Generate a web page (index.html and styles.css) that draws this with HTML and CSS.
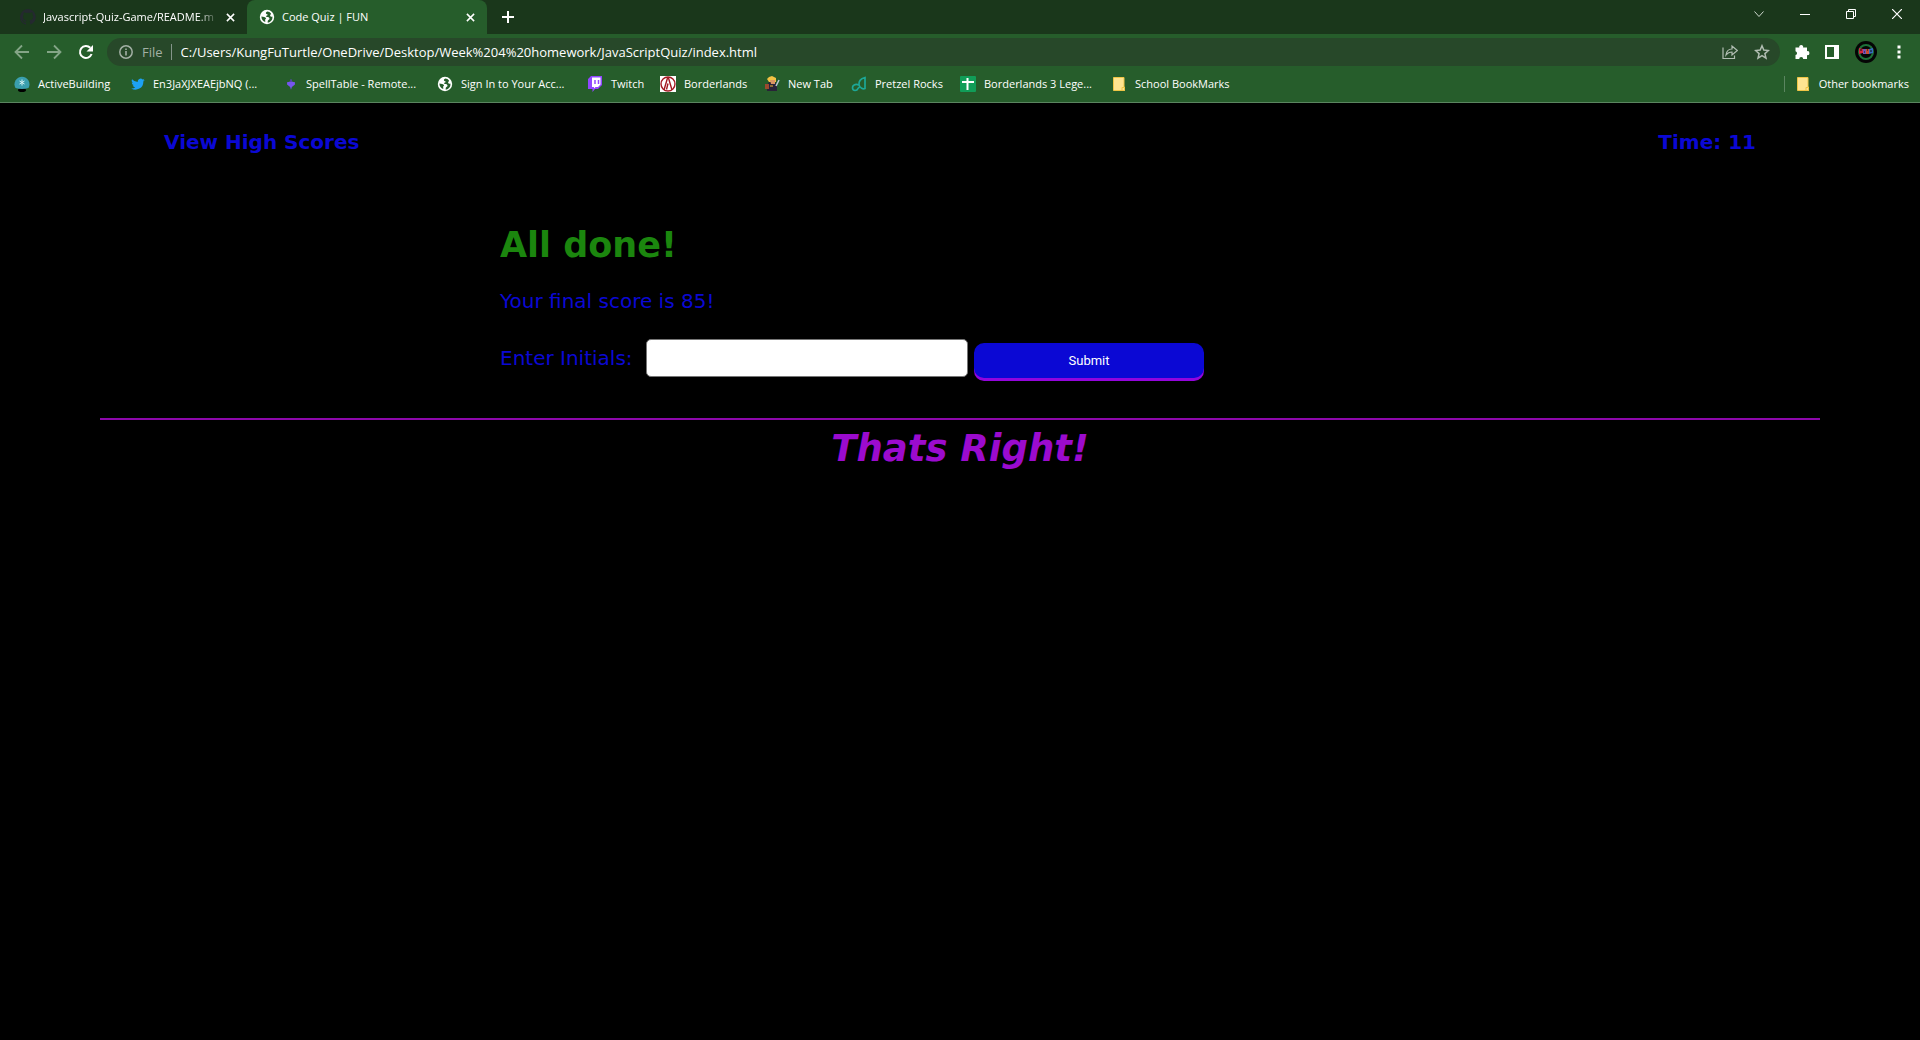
FILE: index.html
```html
<!DOCTYPE html>
<html lang="en">
<head>
<meta charset="utf-8">
<title>Code Quiz | FUN</title>
<link rel="stylesheet" href="styles.css">
</head>
<body>
<svg class="defs" aria-hidden="true">
  <symbol id="close" viewBox="0 0 10 10"><path d="M1 1l8 8M9 1l-8 8" stroke="currentColor" stroke-width="1.7" fill="none"/></symbol>
  <symbol id="globe" viewBox="0 0 16 16"><circle cx="8" cy="8" r="7.2" fill="#fff"/><path d="M8.300 2.600C6.300 3.400 6.500 5 8 5.200C9.300 5.400 8.600 6.600 7.300 6.800C6.800 7.300 7 8 8 8C9.600 8 10.600 8.600 10.500 9.800C10.300 10.900 9.200 10.800 8.800 11.800L8.600 13.600C12 13.200 13.800 10.300 13.400 7.400C12.600 8 11.600 7.800 11.200 7C10.800 6 12 5.600 12 4.600C11.200 3.400 9.800 2.700 8.300 2.600ZM2.400 7.600L5.200 7.900C7 8.300 7.600 9.300 6.600 10.100C5.600 10.800 6.600 12 6.200 13.100C4 12.400 2.400 10.400 2.400 7.600Z" fill="#265d2b"/></symbol>
  <symbol id="folder" viewBox="0 0 12 14"><path d="M0.500 0.500h10.500v9.500h.500v3.500H0.500Z" fill="#ffe490" stroke="#efc546"/><path d="M9 10.500h2.500v3H9Z" fill="#ffe490" stroke="#efc546"/></symbol>
</svg>
<header class="browser">
  <div class="tabstrip">
    <div class="tab">
      <svg class="ico16" viewBox="0 0 16 16"><path fill="#24292f" d="M8 0a8 8 0 0 0-2.500 15.600c.4.1.5-.2.5-.4v-1.500c-2 .4-2.600-.5-2.800-1-.1-.2-.5-.9-.8-1.100-.3-.2-.7-.6 0-.6s1.100.6 1.300.8c.7 1.200 1.900.9 2.400.7.1-.5.300-.9.500-1.100-1.800-.2-3.600-.9-3.600-4 0-.9.300-1.600.8-2.100-.1-.2-.4-1 .1-2.100 0 0 .7-.2 2.200.8a7.600 7.600 0 0 1 4 0c1.500-1 2.200-.8 2.200-.8.4 1.100.2 1.900.1 2.100.5.600.8 1.300.8 2.100 0 3.100-1.900 3.700-3.700 4 .3.200.6.700.6 1.500v2.200c0 .2.100.5.500.4A8 8 0 0 0 8 0Z"/></svg>
      <span class="tab-title fade">Javascript-Quiz-Game/README.m</span>
      <button class="icon-btn" aria-label="Close tab"><svg class="ico8"><use href="#close"/></svg></button>
    </div>
    <div class="tab active">
      <svg class="ico16"><use href="#globe"/></svg>
      <span class="tab-title">Code Quiz | FUN</span>
      <button class="icon-btn" aria-label="Close tab"><svg class="ico8"><use href="#close"/></svg></button>
    </div>
    <button class="icon-btn new-tab" aria-label="New tab"><svg class="ico12" viewBox="0 0 12 12"><path d="M6 0v12M0 6h12" stroke="#fff" stroke-width="2"/></svg></button>
    <div class="window-controls">
      <button class="icon-btn" aria-label="Search tabs"><svg class="ico10" viewBox="0 0 10 10"><path d="M.5 2.500L5 7.500L9.500 2.500" stroke="#cdd6ce" fill="none"/></svg></button>
      <button class="icon-btn" aria-label="Minimize"><svg class="ico10" viewBox="0 0 10 10"><path d="M0 5.500h10" stroke="#fff"/></svg></button>
      <button class="icon-btn" aria-label="Restore"><svg class="ico10" viewBox="0 0 10 10"><path d="M.5 2.500h7v7h-7ZM2.500 2.500v-2h7v7h-2" stroke="#fff" fill="none"/></svg></button>
      <button class="icon-btn" aria-label="Close"><svg class="ico10" viewBox="0 0 10 10"><path d="M0 0l10 10M10 0L0 10" stroke="#fff" stroke-width="1.200"/></svg></button>
    </div>
  </div>
  <div class="toolbar">
    <div class="nav">
      <button class="icon-btn" aria-label="Back"><svg class="ico16" viewBox="0 0 16 16"><path d="M15 8H2M8 1.500L1.500 8L8 14.500" stroke="#84a587" stroke-width="1.800" fill="none"/></svg></button>
      <button class="icon-btn" aria-label="Forward"><svg class="ico16" viewBox="0 0 16 16"><path d="M1 8h13M8 1.500L14.500 8L8 14.500" stroke="#84a587" stroke-width="1.800" fill="none"/></svg></button>
      <button class="icon-btn" aria-label="Reload"><svg class="ico16" viewBox="0 0 16 16"><path d="M13.600 10A6 6 0 1 1 12.300 3.800" stroke="#fff" stroke-width="2" fill="none"/><path d="M15 1v6.500H8.500Z" fill="#fff"/></svg></button>
    </div>
    <div class="omnibox">
      <svg class="ico14" viewBox="0 0 14 14"><circle cx="7" cy="7" r="6.200" fill="none" stroke="#a3b0a5" stroke-width="1.500"/><path d="M7 6v4.500M7 3.500V5" stroke="#a3b0a5" stroke-width="1.600"/></svg>
      <span class="scheme">File</span>
      <input class="url" type="text" aria-label="Address" value="C:/Users/KungFuTurtle/OneDrive/Desktop/Week%204%20homework/JavaScriptQuiz/index.html">
      <button class="icon-btn" aria-label="Share"><svg class="ico16" viewBox="0 0 16 16"><path d="M1 3.500v11h11.500v-3" stroke="#b1bdb2" stroke-width="1.200" fill="none"/><path d="M4 11C4.500 7 7 5 10 5V2L15.300 6.500L10 11V8C7.500 8 5.500 9 4 11Z" stroke="#b1bdb2" stroke-width="1.200" fill="none"/></svg></button>
      <button class="icon-btn" aria-label="Bookmark"><svg class="ico16" viewBox="0 0 16 16"><path d="M8 1.800l1.800 4.300 4.600.4-3.500 3.100 1.100 4.600L8 11.700l-4 2.500 1.100-4.600L1.600 6.500l4.600-.4Z" stroke="#b1bdb2" stroke-width="1.500" fill="none"/></svg></button>
    </div>
    <div class="extensions">
      <button class="icon-btn" aria-label="Extensions"><svg class="ico16" viewBox="0 0 16 16"><path fill="#fff" d="M1.500 3.500h3.800a2 2 0 1 1 3.800 0h3.900v3.700a2 2 0 1 1 0 3.900v3.900H9.200a2 2 0 0 0-4 0H1.500v-3.900a2 2 0 0 0 0-3.900Z"/></svg></button>
      <button class="icon-btn" aria-label="Side panel"><svg class="ico14" viewBox="0 0 14 14"><path d="M0 0h14v14H0ZM2 2v10h7V2Z" fill="#fff" fill-rule="evenodd"/></svg></button>
      <button class="icon-btn" aria-label="Profile"><svg class="ico22" viewBox="0 0 22 22"><circle cx="11" cy="11" r="11" fill="#050505"/><circle cx="11" cy="11" r="7" fill="none" stroke="#1e7139" stroke-width="2"/><path d="M4 7l4 1v4l-4 1Z" fill="#d4263c"/><path d="M8 8h3v5H8Z" fill="#7354b5"/><path d="M11 8h3v5h-3Z" fill="#c84d33"/><path d="M14 8l4-1v5l-4 1Z" fill="#356bc0"/><path d="M5 9h2M9 11h1M12 9h1M15 10h2" stroke="#111"/></svg></button>
      <button class="icon-btn" aria-label="Menu"><svg class="ico14" viewBox="0 0 14 14"><path d="M5.500 0.500h3v3h-3ZM5.500 5.500h3v3h-3ZM5.500 10.500h3v3h-3Z" fill="#fff"/></svg></button>
    </div>
  </div>
  <nav class="bookmarks">
    <a href="#"><svg class="ico16" viewBox="0 0 16 16"><ellipse cx="8" cy="14" rx="4" ry="2" fill="#000"/><path d="M1.500 12a7.500 7.500 0 1 1 13 0Q8 14 1.500 12Z" fill="#3a9fae"/><path d="M8 3.500v6M5.500 5l5 3M10.500 5l-5 3" stroke="#d3f2f2"/></svg>ActiveBuilding</a>
    <a href="#"><svg class="ico14" viewBox="0 0 24 24"><path fill="#1da1f2" d="M23.600 5a9.600 9.600 0 0 1-2.700.8 4.700 4.700 0 0 0 2-2.600 9.600 9.600 0 0 1-3 1.200 4.800 4.800 0 0 0-8.200 4.300A13.500 13.500 0 0 1 1.900 3.700a4.800 4.800 0 0 0 1.500 6.300 4.700 4.700 0 0 1-2.200-.6 4.800 4.800 0 0 0 3.800 4.700 4.800 4.800 0 0 1-2.100.1 4.800 4.800 0 0 0 4.400 3.300A9.600 9.600 0 0 1 .3 19.500a13.500 13.500 0 0 0 20.800-12A9.700 9.700 0 0 0 23.600 5Z"/></svg>En3JaXJXEAEjbNQ (...</a>
    <a href="#"><svg class="ico14" viewBox="0 0 16 16"><path d="M8 2l1.500 3.500L12.500 6v2.500L9 11.500L8 14.500L7 11.500L3.500 8.500V6l3-.5Z" fill="#7655ef"/><path d="M8 2l1 3.500H7Z" fill="#3c3c83"/></svg>SpellTable - Remote...</a>
    <a href="#"><svg class="ico16"><use href="#globe"/></svg>Sign In to Your Acc...</a>
    <a href="#"><svg class="ico16" viewBox="0 0 16 16"><path d="M4 0h11v9l-4 4H8l-2.500 3v-3H1V3Z" fill="#9147ff"/><path d="M5 1.500h8.500v7L11 11H8.500L7 12.500V11H5Z" fill="#fff"/><path d="M8 4v4M11.500 4v4" stroke="#9147ff" stroke-width="1.500"/></svg>Twitch</a>
    <a href="#"><svg class="ico16" viewBox="0 0 16 16"><path d="M0 0h16v16H0Z" fill="#fff"/><circle cx="8" cy="8" r="7" fill="none" stroke="#a31922" stroke-width="1.400"/><path d="M4 14L7.500 2h1L12 14M6.500 13.500L8 7.500" stroke="#a31922" stroke-width="1.400" fill="none"/></svg>Borderlands</a>
    <a href="#"><svg class="ico16" viewBox="0 0 16 16"><path d="M5 6h6l2 3v6H3V9Z" fill="#292338"/><path d="M5 1l3-1 4 2v4H5L3 3Z" fill="#f3c244"/><path d="M6 4h5v4H7Z" fill="#dc9564"/><path d="M1 8h4v5H1Z" fill="#9b4a2e"/><path d="M12 10l3-6" stroke="#b9c7d8" stroke-width="1.500"/><path d="M6 9h3v2H6Z" fill="#8d6d35"/></svg>New Tab</a>
    <a href="#"><svg class="ico16" viewBox="0 0 16 16"><path d="M14 1.500C10 2.500 7.500 5 8 9C9 12 12 13.500 14 12.500ZM8 9C4 7.500 1.200 9.500 1.500 12C2 15.500 6 15 7 12.500L9 10.500" fill="none" stroke="#1da898" stroke-width="1.700"/></svg>Pretzel Rocks</a>
    <a href="#"><svg class="ico16" viewBox="0 0 16 16"><rect width="16" height="16" rx="1" fill="#119d58"/><path d="M7.500 2v12M2 6h12" stroke="#fff" stroke-width="2"/></svg>Borderlands 3 Lege...</a>
    <a href="#"><svg class="folder"><use href="#folder"/></svg>School BookMarks</a>
    <a class="other" href="#"><svg class="folder"><use href="#folder"/></svg>Other bookmarks</a>
  </nav>
</header>
<div class="page">
  <header class="quiz-head">
    <a href="#">View High Scores</a>
    <span>Time: 11</span>
  </header>
  <main class="result">
    <h1>All done!</h1>
    <p>Your final score is 85!</p>
    <form>
      <label for="initials">Enter Initials:</label>
      <input id="initials" type="text">
      <button type="button">Submit</button>
    </form>
  </main>
  <footer class="feedback">Thats Right!</footer>
</div>
</body>
</html>
```
FILE: styles.css
```css
* { box-sizing: border-box; }
body { margin: 0; min-height: 100vh; background: #000; font-family: "DejaVu Sans", Verdana, sans-serif; }
a { color: inherit; text-decoration: none; }
svg { flex: none; display: block; }
.defs { position: absolute; width: 0; height: 0; }
.ico8 { width: 9px; height: 9px; }
.ico10 { width: 10px; height: 10px; }
.ico12 { width: 12px; height: 12px; }
.ico14 { width: 14px; height: 14px; }
.ico16 { width: 16px; height: 16px; }
.ico22 { width: 22px; height: 22px; }
.folder { width: 12px; height: 14px; margin: 0 2px 0 0; }
.icon-btn { display: flex; align-items: center; justify-content: center; padding: 0; border: 0; background: none; color: #fff; }

.browser { background: #265d2b; color: #fff; font: 11px/16px "Open Sans", "Segoe UI", sans-serif; border-bottom: 1px solid #5b8560; }
.tabstrip { display: flex; height: 34px; background: #1a371b; }
.tab { display: flex; align-items: center; gap: 7px; width: 240px; padding: 0 12px; }
.tab:first-child { width: 247px; padding-left: 20px; }
.tab.active { background: #265d2b; border-radius: 8px 8px 0 0; }
.tab-title { flex: 1; min-width: 0; white-space: nowrap; }
.fade { mask-image: linear-gradient(to right, #000 88%, transparent); }
.new-tab { width: 42px; }
.window-controls { display: flex; margin-left: auto; height: 28px; }
.window-controls .icon-btn { width: 46px; }

.toolbar { display: flex; align-items: center; height: 36px; padding: 0 14px; }
.nav { display: flex; gap: 16px; width: 93px; }
.omnibox { display: flex; flex: 1; align-items: center; height: 28px; padding: 0 10px 0 12px; border-radius: 14px; background: #274829; font-size: 13px; }
.scheme { margin: 0 9px; padding-right: 8px; border-right: 1px solid #84958a; color: #a3b0a5; line-height: 16px; }
.url { flex: 1; min-width: 0; padding: 0; border: 0; background: none; color: #fff; font: inherit; }
.omnibox .icon-btn { margin-left: 16px; }
.extensions { display: flex; align-items: center; justify-content: space-between; width: 112px; margin-left: 14px; }

.bookmarks { display: grid; grid-template-columns: 117px 153px 153px 150px 73px 104px 87px 109px 153px 1fr auto; align-items: center; height: 32px; padding: 0 11px 4px 14px; white-space: nowrap; }
.bookmarks a { display: flex; align-items: center; gap: 8px; }
.bookmarks .other { padding-left: 12px; border-left: 1px solid #5b8560; }

.page { margin: 0 100px; color: #0b08d4; font-size: 20px; }
.quiz-head { display: flex; justify-content: space-between; padding: 27px 64px; font-weight: bold; line-height: 24px; }
.result { max-width: 920px; margin: 0 auto; padding: 40px 0; }
.result h1 { margin: 0; color: #1b860e; font-size: 35px; line-height: 48px; }
.result p { margin: 20px 0 26px; line-height: 24px; }
.result form { display: flex; align-items: baseline; }
.result label { width: 146px; }
.result input { width: 322px; height: 38px; margin-right: 6px; padding: 0 8px; border: 1px solid #767676; border-radius: 5px; background: #fff; font-size: 20px; }
.result button { width: 230px; height: 35px; border: 0; border-radius: 10px; background: #0b08d4; box-shadow: 0 3px #9305dd; color: #fff; font: 13px "Roboto", Arial, sans-serif; }
.feedback { border-top: 2px solid #8d08ab; color: #9b0bce; font-size: 37px; font-weight: bold; font-style: italic; line-height: 58px; text-align: center; }
```
